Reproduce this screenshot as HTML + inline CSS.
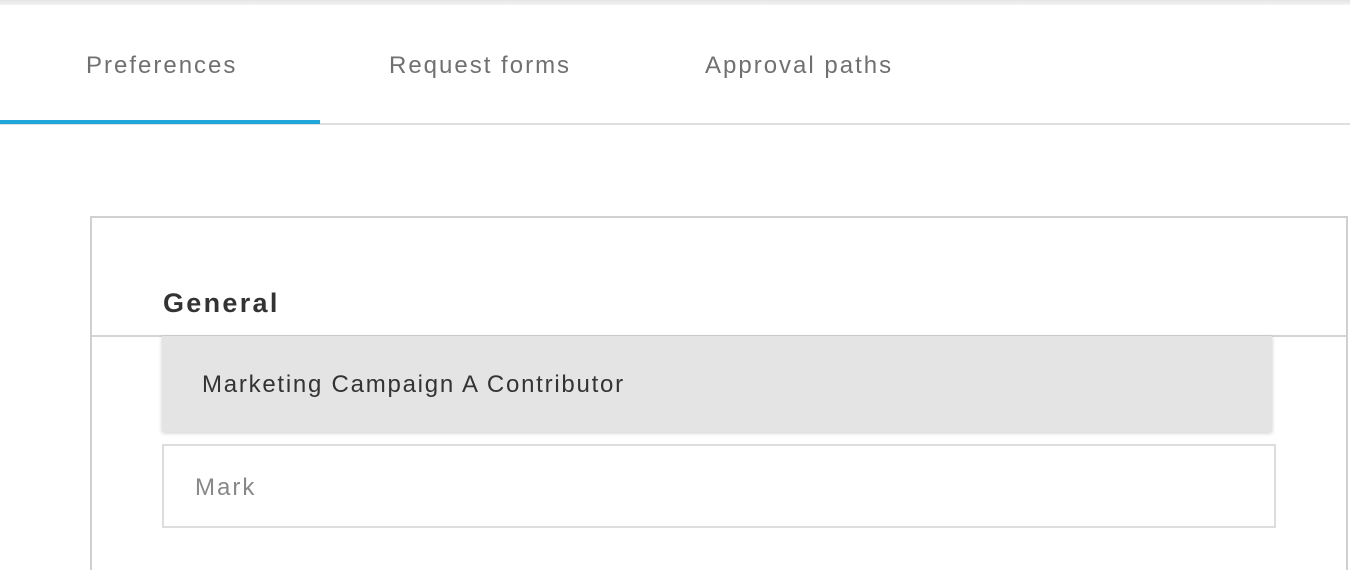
<!DOCTYPE html>
<html style="margin:0;width:1350px;height:570px;overflow:hidden"><head><style>
body{margin:0;width:1350px;height:570px;overflow:hidden;background:#fff;font-family:"Liberation Sans",sans-serif;position:relative}
.top{position:absolute;left:0;top:0;width:1350px;height:5px;background:linear-gradient(#e4e4e4,#f4f4f4)}
.tab{position:absolute;top:52px;font-size:24px;color:#707070;letter-spacing:2px}
.line{position:absolute;left:0;top:123px;width:1350px;height:2px;background:#e0e0e0}
.blue{position:absolute;left:0;top:120px;width:320px;height:4px;background:#21a6dc}
.box{position:absolute;left:90px;top:216px;width:1254px;height:354px;border:2px solid #d0d0d0;border-bottom:none;box-sizing:border-box;width:1258px}
.hr{position:absolute;left:92px;top:335px;width:1254px;height:2px;background:#d4d4d4}
.gen{position:absolute;left:163px;top:288px;font-size:27px;font-weight:bold;color:#333;letter-spacing:2.3px}
.dd{position:absolute;left:162px;top:336px;width:1110px;height:96px;background:#e4e4e4;box-shadow:0 1px 4px rgba(0,0,0,.2)}
.dd span{position:absolute;left:40px;top:35px;font-size:24px;color:#333;letter-spacing:1.75px;white-space:nowrap}
.inp{position:absolute;left:162px;top:444px;width:1110px;height:80px;border:2px solid #ddd}
.inp span{position:absolute;left:31px;top:28px;font-size:24px;color:#888;letter-spacing:2px}
</style></head><body>
<div class="top"></div>
<div class="tab" style="left:86px">Preferences</div>
<div class="tab" style="left:389px">Request forms</div>
<div class="tab" style="left:705px">Approval paths</div>
<div class="line"></div><div class="blue"></div>
<div class="box"></div>
<div class="gen">General</div>
<div class="hr"></div>
<div class="dd"><span>Marketing Campaign A Contributor</span></div>
<div class="inp"><span>Mark</span></div>
</body></html>
